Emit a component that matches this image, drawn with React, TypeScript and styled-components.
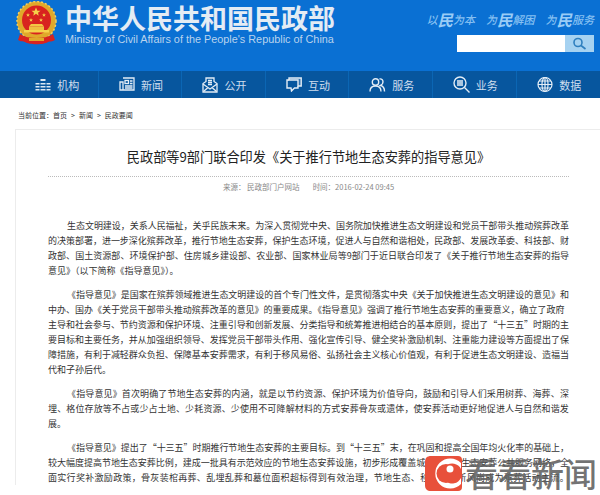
import React from "react";
import styled, { createGlobalStyle } from "styled-components";

const cjk = `"Noto Sans CJK SC", "Liberation Sans", sans-serif`;

const GlobalStyle = createGlobalStyle`
  html, body {
    margin: 0;
    background: #fff;
    overflow: hidden;
  }
`;

const Page = styled.div`
  position: relative;
  width: 600px;
  height: 495px;
  overflow: hidden;
  font-family: ${cjk};
`;

const Header = styled.header`
  display: flex;
  justify-content: space-between;
  height: 71px;
  background: #0a70d3;
`;

const Brand = styled.div`
  display: flex;
  gap: 8px;
  padding: 1px 0 0 16px;
`;

const BrandText = styled.div`
  display: flex;
  flex-direction: column;
  padding-top: 1px;
`;

const BrandTitle = styled.div`
  font-size: 27px;
  line-height: 31px;
  font-weight: 700;
  white-space: nowrap;
  color: #e4ecf4;
`;

const BrandSub = styled.div`
  font-family: "Liberation Sans", sans-serif;
  font-size: 10.85px;
  line-height: 12px;
  white-space: nowrap;
  color: #b9d3ee;
`;

const HeaderRight = styled.div`
  display: flex;
  flex-direction: column;
  align-items: flex-end;
  gap: 7px;
  padding: 11px 6px 0 0;
`;

const Slogans = styled.div`
  display: flex;
  gap: 11px;
  height: 17px;
`;

const Slogan = styled.div`
  display: flex;
  align-items: center;
  font-size: 11px;
  line-height: 17px;
  font-style: italic;
  font-weight: 500;
  white-space: nowrap;
  color: #86c0f2;
`;

const SloganBig = styled.span`
  font-size: 15.500px;
  font-weight: 700;
  color: #9accf6;
`;

const Search = styled.div`
  display: flex;
  width: 137px;
  height: 17px;
`;

const SearchInput = styled.div`
  flex: 1;
  background: #fff;
`;

const SearchButton = styled.div`
  display: flex;
  align-items: center;
  justify-content: center;
  width: 29px;
  background: #a6d2f1;
`;

const Nav = styled.nav`
  display: flex;
  height: 27px;
  padding-left: 15px;
  background: #07569e;
`;

const NavItem = styled.div`
  flex: 0 0 83.6px;
  box-sizing: border-box;
  display: flex;
  align-items: center;
  justify-content: center;
  gap: 6px;
  padding-left: 2px;
  border-right: 1px solid #0b66b4;
  font-size: 11px;
  color: #cfdeee;
  &:last-child {
    border-right: 0;
  }
`;

const Crumb = styled.div`
  display: flex;
  align-items: center;
  gap: 4px;
  height: 31px;
  padding: 2px 0 0 18px;
  box-sizing: border-box;
  font-size: 7px;
  color: #333;
`;

const Panel = styled.main`
  box-sizing: border-box;
  margin-left: 15px;
  padding: 18px 0 0 32px;
  border-top: 1px solid #ececec;
  border-left: 1px solid #ececec;
`;

const Title = styled.h1`
  margin: 0;
  width: 521px;
  height: 29px;
  box-sizing: border-box;
  border-bottom: 1px dotted #bbb;
  padding: 0;
  font-size: 13.200px;
  line-height: 18px;
  font-weight: 400;
  text-align: center;
  white-space: nowrap;
  color: #222;
`;

const Meta = styled.div`
  display: flex;
  justify-content: center;
  gap: 13px;
  width: 521px;
  margin-top: 4px;
  height: 12px;
  line-height: 12px;
  font-size: 7.500px;
  white-space: nowrap;
  color: #888;
`;

const Article = styled.article`
  display: flex;
  flex-direction: column;
  gap: 9px;
  width: 521px;
  margin-top: 25px;
`;

const Paragraph = styled.div`
  display: flex;
  flex-direction: column;
`;

const Line = styled.div<{ $first: boolean }>`
  height: 15px;
  line-height: 15px;
  font-size: 9px;
  white-space: nowrap;
  color: #333;
  padding-left: ${({ $first }) => ($first ? "19px" : "0")};
`;

const Watermark = styled.div`
  position: absolute;
  left: 425px;
  top: 456px;
  display: flex;
  align-items: center;
  gap: 3px;
`;

const WatermarkText = styled.div`
  font-size: 33px;
  line-height: 35px;
  font-weight: 500;
  white-space: nowrap;
  color: rgba(95, 95, 95, 0.88);
`;

const paragraphs: string[][] = [
  [
    "生态文明建设，关系人民福祉，关乎民族未来。为深入贯彻党中央、国务院加快推进生态文明建设和党员干部带头推动殡葬改革",
    "的决策部署，进一步深化殡葬改革，推行节地生态安葬，保护生态环境，促进人与自然和谐相处，民政部、发展改革委、科技部、财",
    "政部、国土资源部、环境保护部、住房城乡建设部、农业部、国家林业局等9部门于近日联合印发了《关于推行节地生态安葬的指导",
    "意见》（以下简称《指导意见》）。",
  ],
  [
    "《指导意见》是国家在殡葬领域推进生态文明建设的首个专门性文件，是贯彻落实中央《关于加快推进生态文明建设的意见》和",
    "中办、国办《关于党员干部带头推动殡葬改革的意见》的重要成果。《指导意见》强调了推行节地生态安葬的重要意义，确立了政府",
    "主导和社会参与、节约资源和保护环境、注重引导和创新发展、分类指导和统筹推进相结合的基本原则，提出了“十三五”时期的主",
    "要目标和主要任务，并从加强组织领导、发挥党员干部带头作用、强化宣传引导、健全奖补激励机制、注重能力建设等方面提出了保",
    "障措施，有利于减轻群众负担、保障基本安葬需求，有利于移风易俗、弘扬社会主义核心价值观，有利于促进生态文明建设、造福当",
    "代和子孙后代。",
  ],
  [
    "《指导意见》首次明确了节地生态安葬的内涵，就是以节约资源、保护环境为价值导向，鼓励和引导人们采用树葬、海葬、深",
    "埋、格位存放等不占或少占土地、少耗资源、少使用不可降解材料的方式安葬骨灰或遗体，使安葬活动更好地促进人与自然和谐发",
    "展。",
  ],
  [
    "《指导意见》提出了“十三五”时期推行节地生态安葬的主要目标。到“十三五”末，在巩固和提高全国年均火化率的基础上，",
    "较大幅度提高节地生态安葬比例，建成一批具有示范效应的节地生态安葬设施，初步形成覆盖城乡的节地生态安葬公共服务网络，全",
    "面实行奖补激励政策，骨灰装棺再葬、乱埋乱葬和墓位面积超标得到有效治理，节地生态、移风易俗新风尚成为殡葬活动主流。",
  ],
];

// fit a full line to the column width, short closing lines keep plain spacing
function fitSpacing(text: string, first: boolean) {
  if (text.length < 40) return 0;
  const chars = [...text];
  const natural = chars.reduce((sum, c) => sum + (c.charCodeAt(0) < 128 ? 5 : 9), 0);
  return (521 - (first ? 19 : 0) - natural) / chars.length;
}

function Emblem() {
  const stars: [number, number, number][] = [
    [20, 11, 4.5],
    [12, 14, 2],
    [15, 19, 2],
    [25, 19, 2],
    [28, 14, 2],
  ];
  return (
    <svg width="41" height="45" viewBox="0 0 41 45">
      <circle cx="20.5" cy="20" r="19.5" fill="#e0a92a" />
      <circle cx="20.5" cy="20" r="19.5" fill="none" stroke="#f3d060" strokeWidth="1.500" strokeDasharray="2 2" />
      <circle cx="20.5" cy="19" r="14.5" fill="#d8231f" />
      {stars.map(([x, y, r]) => (
        <polygon
          key={`${x}-${y}`}
          fill="#f5d24a"
          points={`${x},${y - r} ${x + r * 0.3},${y - r * 0.3} ${x + r},${y - r * 0.3} ${x + r * 0.45},${y + r * 0.15} ${x + r * 0.6},${y + r * 0.85} ${x},${y + r * 0.4} ${x - r * 0.6},${y + r * 0.85} ${x - r * 0.45},${y + r * 0.15} ${x - r},${y - r * 0.3} ${x - r * 0.3},${y - r * 0.3}`}
        />
      ))}
      <path d="M15 23h11l2 2.500H13z" fill="#f2c744" />
      <rect x="13" y="25.500" width="15" height="3.500" fill="#eec040" />
      <rect x="8" y="29" width="25" height="2.500" fill="#f5d24a" />
      <path d="M4 33c5 3 10 4 16.500 4s11.500-1 16.500-4l2 6c-3 2-5 1-7 2-4 3-19 3-23 0-2-1-4 0-7-2z" fill="#d8231f" />
      <path d="M13 37h15v3H13z" fill="#e0a92a" />
    </svg>
  );
}

function StackIcon() {
  return (
    <svg width="16" height="14" viewBox="0 0 16 14" fill="#dbe7f3">
      <rect x="5.500" y="1" width="5" height="2" />
      <rect x="0.500" y="5" width="4" height="1.500" />
      <rect x="5.500" y="5" width="5" height="1.500" />
      <rect x="11.500" y="5" width="4" height="1.500" />
      <rect x="0.500" y="8" width="4" height="1.500" />
      <rect x="5.500" y="8" width="5" height="1.500" />
      <rect x="11.500" y="8" width="4" height="1.500" />
      <rect x="0.500" y="11" width="4" height="1.500" />
      <rect x="5.500" y="11" width="5" height="1.500" />
      <rect x="11.500" y="11" width="4" height="1.500" />
    </svg>
  );
}

function NewsIcon() {
  return (
    <svg width="16" height="15" viewBox="0 0 16 15" fill="none" stroke="#e4edf6" strokeWidth="1.300">
      <path d="M4 1h11v12H1V5h3v8" />
      <rect x="6" y="3.500" width="3.500" height="3" />
      <path d="M11 4h2.500M11 6.500h2.500M6 9h7.500M6 11h7.500" />
    </svg>
  );
}

function MailIcon() {
  return (
    <svg width="16" height="16" viewBox="0 0 16 16" fill="none" stroke="#e4edf6" strokeWidth="1.300">
      <path d="M1 6.500v8.500h14V6.500L12 4.500V1H4v3.500z" />
      <path d="M1 7l7 5 7-5M1.500 14.500L6 10.500M14.500 14.500L10 10.500" />
      <path d="M6 3.500h4M6 5.500h4M6 7.500h4" />
    </svg>
  );
}

function ChatIcon() {
  return (
    <svg width="16" height="15" viewBox="0 0 16 15" fill="none" stroke="#e4edf6" strokeWidth="1.400">
      <path d="M3 3H1v8h4l0.500 3 3-3H12V9" />
      <path d="M3 3V1h12.200v8H12V3z" fill="#e4edf6" fillOpacity="0.2" />
    </svg>
  );
}

function UsersIcon() {
  return (
    <svg width="17" height="14" viewBox="0 0 17 14" fill="none" stroke="#e4edf6" strokeWidth="1.400">
      <circle cx="6.500" cy="4" r="3.200" />
      <path d="M1 13.500c0-3.500 2-5.500 5.500-5.500s5.500 2 5.500 5.500" />
      <path d="M10.500 1c2-0.500 3.500 1 3.500 3s-1.500 3-2.500 3.500c2.500 0.500 4 2.500 4 6" />
    </svg>
  );
}

function SearchDocIcon() {
  return (
    <svg width="17" height="17" viewBox="0 0 17 17" fill="none" stroke="#e4edf6" strokeWidth="1.400">
      <circle cx="7" cy="7" r="6" />
      <path d="M4 5h6M4 7h6M4 9h6M11.500 11.500L16.500 16.500" />
    </svg>
  );
}

function GlobeIcon() {
  return (
    <svg width="16" height="16" viewBox="0 0 16 16" fill="none" stroke="#e4edf6" strokeWidth="1.200">
      <circle cx="8" cy="7.500" r="7" />
      <ellipse cx="8" cy="7.500" rx="3" ry="7" />
      <path d="M1 7.500h14M2 4h12M2 11h12M8 0.500v14" />
    </svg>
  );
}

function SearchGlass() {
  return (
    <svg width="15" height="13" viewBox="0 0 15 13" fill="none" stroke="#2f7fbe" strokeWidth="1.600">
      <circle cx="6" cy="5.500" r="4" />
      <path d="M9 8.500l4.500 3.500" />
    </svg>
  );
}

function WatermarkLogo() {
  return (
    <svg width="37" height="35" viewBox="0 0 37 35">
      <path d="M6 0h27a4 4 0 0 1 4 4v27a4 4 0 0 1-4 4H6C2 35 0 33 0 29V6C0 2 2 0 6 0z" fill="#e8503a" />
      <path d="M36 7A15 15 0 1 0 36 28V22A10 10 0 1 1 36 13z" fill="#fff" />
      <circle cx="21" cy="17.500" r="9.500" fill="#e8503a" />
      <circle cx="25" cy="13" r="3.500" fill="#fff" />
    </svg>
  );
}

const navItems: [React.ReactNode, string][] = [
  [<StackIcon key="a" />, "机构"],
  [<NewsIcon key="b" />, "新闻"],
  [<MailIcon key="c" />, "公开"],
  [<ChatIcon key="d" />, "互动"],
  [<UsersIcon key="e" />, "服务"],
  [<SearchDocIcon key="f" />, "业务"],
  [<GlobeIcon key="g" />, "数据"],
];

export default function App() {
  return (
    <Page>
      <GlobalStyle />
      <Header>
        <Brand>
          <Emblem />
          <BrandText>
            <BrandTitle>中华人民共和国民政部</BrandTitle>
            <BrandSub>Ministry of Civil Affairs of the People's Republic of China</BrandSub>
          </BrandText>
        </Brand>
        <HeaderRight>
          <Slogans>
            <Slogan>以<SloganBig>民</SloganBig>为本</Slogan>
            <Slogan>为<SloganBig>民</SloganBig>解困</Slogan>
            <Slogan>为<SloganBig>民</SloganBig>服务</Slogan>
          </Slogans>
          <Search>
            <SearchInput />
            <SearchButton>
              <SearchGlass />
            </SearchButton>
          </Search>
        </HeaderRight>
      </Header>
      <Nav>
        {navItems.map(([icon, label]) => (
          <NavItem key={label}>
            {icon}
            {label}
          </NavItem>
        ))}
      </Nav>
      <Crumb>
        <span>当前位置：首页</span>
        <span>&gt;</span>
        <span>新闻</span>
        <span>&gt;</span>
        <span>民政要闻</span>
      </Crumb>
      <Panel>
        <Title>民政部等9部门联合印发《关于推行节地生态安葬的指导意见》</Title>
        <Meta>
          <span>来源： 民政部门户网站</span>
          <span>时间：2016-02-24 09:45</span>
        </Meta>
        <Article>
          {paragraphs.map((lines, p) => (
            <Paragraph key={p}>
              {lines.map((text, i) => (
                <Line key={i} $first={i === 0} style={{ letterSpacing: fitSpacing(text, i === 0) }}>
                  {text}
                </Line>
              ))}
            </Paragraph>
          ))}
        </Article>
      </Panel>
      <Watermark>
        <WatermarkLogo />
        <WatermarkText>看看新闻</WatermarkText>
      </Watermark>
    </Page>
  );
}
